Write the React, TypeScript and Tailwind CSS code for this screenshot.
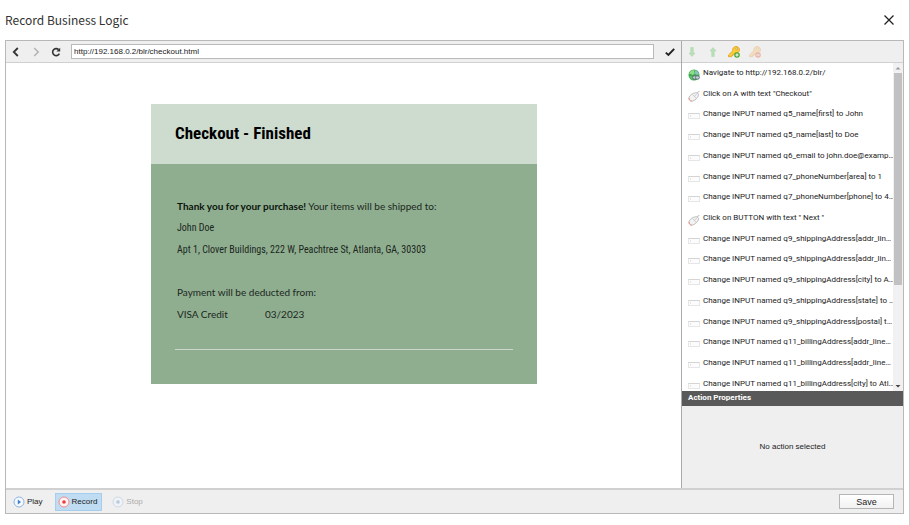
import React, { useState } from 'react';

type ActionKind = 'navigate' | 'click' | 'input';

type Action = {
  kind: ActionKind;
  text: string;
};

// long labels arrive already shortened
const ACTIONS: Action[] = [
  { kind: 'navigate', text: 'Navigate to http://192.168.0.2/blr/' },
  { kind: 'click', text: 'Click on A with text "Checkout"' },
  { kind: 'input', text: 'Change INPUT named q5_name[first] to John' },
  { kind: 'input', text: 'Change INPUT named q5_name[last] to Doe' },
  { kind: 'input', text: 'Change INPUT named q6_email to john.doe@examp…' },
  { kind: 'input', text: 'Change INPUT named q7_phoneNumber[area] to 1' },
  { kind: 'input', text: 'Change INPUT named q7_phoneNumber[phone] to 4…' },
  { kind: 'click', text: 'Click on BUTTON with text " Next "' },
  { kind: 'input', text: 'Change INPUT named q9_shippingAddress[addr_lin…' },
  { kind: 'input', text: 'Change INPUT named q9_shippingAddress[addr_lin…' },
  { kind: 'input', text: 'Change INPUT named q9_shippingAddress[city] to A…' },
  { kind: 'input', text: 'Change INPUT named q9_shippingAddress[state] to …' },
  { kind: 'input', text: 'Change INPUT named q9_shippingAddress[postal] t…' },
  { kind: 'input', text: 'Change INPUT named q11_billingAddress[addr_line…' },
  { kind: 'input', text: 'Change INPUT named q11_billingAddress[addr_line…' },
  { kind: 'input', text: 'Change INPUT named q11_billingAddress[city] to Atl…' },
];

function ActionIcon({ kind }: { kind: ActionKind }) {
  if (kind === 'navigate') {
    return (
      <svg viewBox="0 0 12 12" className="h-3 w-3 shrink-0" aria-hidden="true">
        <circle cx="6" cy="6" r="5.5" fill="#3fa850" />
        <path d="M1.2 5C1.800 2.400 4 .9 6.400 1L6 3 7 4.400 4.600 6 3 5Z" fill="#8ede86" />
        <path d="M6.800 1.200c2.400.4 4 2.200 4.300 4.200L8 5.800 6.800 4Z" fill="#86c4c0" />
        <path d="M1.400 7l2.800.6L5 10.800C3 10.200 1.800 8.800 1.400 7Z" fill="#5fc768" />
        <rect x="4.600" y="6.800" width="4" height="3.400" rx="1.600" fill="#c7ced3" stroke="#56646e" strokeWidth=".8" />
        <rect x="7.400" y="6.800" width="4" height="3.400" rx="1.600" fill="#c7ced3" stroke="#56646e" strokeWidth=".8" />
      </svg>
    );
  }
  if (kind === 'click') {
    return (
      <svg viewBox="0 0 12 12" className="h-3 w-3 shrink-0" fill="none" aria-hidden="true">
        <path d="M9 3.400C9 1.800 10.600 2.600 11.500 1" stroke="#aaa" strokeWidth=".8" />
        <path
          d="M1.200 7C2.600 4.600 4.800 3.200 7.400 2.800c2.600-.4 3.800 1.400 2.800 3.400C9.200 8.200 7.200 10 4.800 11c-2.200.8-4.800-1.500-3.600-4Z"
          fill="#f3f3f3"
          stroke="#b0b0b0"
          strokeWidth=".8"
        />
        <path d="M4.600 4.600l3.600 3.600M6.500 6.400l2.200-2.400" stroke="#bbb" strokeWidth=".7" />
        <path d="M1.200 8c-.3 1.600.8 2.900 2.600 3.200" stroke="#ee8f88" strokeWidth="1" />
      </svg>
    );
  }
  return (
    <svg viewBox="0 0 12 12" className="h-3 w-3 shrink-0" fill="none" aria-hidden="true">
      <rect x=".5" y="3.500" width="11" height="5" fill="#fcfcfc" stroke="#e6e6e6" />
      <path d="M.5 3.500h11" stroke="#d4d4d4" />
      <path d="M2.500 5v2" stroke="#e4e4e4" />
    </svg>
  );
}

function ArrowIcon({ up }: { up?: boolean }) {
  return (
    <svg viewBox="0 0 12 12" className="h-3 w-3" aria-hidden="true">
      <path
        d={up ? 'M6 1.500 9 5H7.300v5.500H4.700V5H3Z' : 'M6 10.500 9 7H7.300V1.500H4.700V7H3Z'}
        fill="#b8dfb8"
        stroke="#abd3ab"
        strokeWidth=".5"
      />
    </svg>
  );
}

function KeyIcon({ remove }: { remove?: boolean }) {
  return (
    <svg viewBox="0 0 12 12" className={remove ? 'h-3 w-3 opacity-35' : 'h-3 w-3'} aria-hidden="true">
      <path
        d="M.5 9 4.800 4.800C4.200 2.400 5.800.5 8 .5c2.100 0 3.500 1.500 3.500 3.300 0 2.200-2 3.600-4.200 3.200L6.200 8.200H5v1.200H3.700v1.300H.5Z"
        fill={remove ? '#f8bd62' : '#fdcd36'}
        stroke={remove ? '#e08e42' : '#dda024'}
        strokeWidth=".8"
      />
      <circle cx="8.800" cy="2.900" r="1" fill="#fff7cf" stroke="#b67a10" strokeWidth=".5" />
      <circle cx="9" cy="9" r="2.800" fill={remove ? '#e2502e' : '#43a52b'} />
      <path d={remove ? 'M7.300 9h3.400' : 'M7.300 9h3.400M9 7.300v3.400'} stroke="#fff" strokeWidth="1" />
    </svg>
  );
}

function MediaIcon({ kind }: { kind: 'play' | 'record' | 'stop' }) {
  const color = kind === 'record' ? '#ee3b3b' : '#3f7fcb';
  return (
    <svg viewBox="0 0 12 12" className="h-3 w-3" aria-hidden="true">
      <circle
        cx="6"
        cy="6"
        r="5"
        fill={kind === 'record' ? '#fff3f3' : '#f4f9ff'}
        stroke={kind === 'record' ? '#f08c8c' : '#8fb3e0'}
      />
      {kind === 'play' && <path d="M4.800 3.500 8 6 4.800 8.500Z" fill={color} />}
      {kind === 'record' && <circle cx="6" cy="6" r="1.800" fill={color} />}
      {kind === 'stop' && <rect x="4.500" y="4.500" width="3" height="3" fill={color} />}
    </svg>
  );
}

function BrowserBar() {
  const [url, setUrl] = useState('http://192.168.0.2/blr/checkout.html');
  return (
    <div className="flex h-[22px] items-center border-b border-[#d0d0d0] bg-[#efefef]">
      <button aria-label="Back" className="flex w-5 justify-center text-[#333]">
        <svg viewBox="0 0 10 10" className="h-[10px] w-[10px]" fill="none" stroke="currentColor" strokeWidth="1.800">
          <path d="M6.800 1 2.800 5l4 4" />
        </svg>
      </button>
      <button aria-label="Forward" disabled className="flex w-5 justify-center text-[#b3b3b3]">
        <svg viewBox="0 0 10 10" className="h-[10px] w-[10px]" fill="none" stroke="currentColor" strokeWidth="1.500">
          <path d="M3.200 1 7.200 5l-4 4" />
        </svg>
      </button>
      <button aria-label="Reload" className="flex w-5 justify-center text-[#333]">
        <svg viewBox="0 0 10 10" className="h-[10px] w-[10px]" fill="none" stroke="currentColor" strokeWidth="1.600">
          <path d="M8.300 6.600A3.500 3.500 0 1 1 7.600 2.600" />
          <path d="M9.200.8v3.800H5.400Z" fill="currentColor" stroke="none" />
        </svg>
      </button>
      <input
        aria-label="Address"
        value={url}
        onChange={(e) => setUrl(e.target.value)}
        className="ml-[5px] h-[15px] min-w-0 flex-1 border border-[#b9b9b9] bg-white px-0.5 text-[8px] leading-3 text-[#222] outline-none"
      />
      <button aria-label="Go" className="flex w-[27px] justify-center pl-1 text-[#222]">
        <svg viewBox="0 0 10 10" className="h-[10px] w-[10px]" fill="none" stroke="currentColor" strokeWidth="1.900">
          <path d="M.8 5.600 3.400 8 9.200 1.800" />
        </svg>
      </button>
    </div>
  );
}

function CheckoutPage() {
  return (
    <div className="flex-1 overflow-hidden bg-white pt-[41px] pr-36 pl-[145px]">
      <div className="bg-[#8fae90]">
        <header className="flex h-[60px] items-center bg-[#cedccf] px-6">
          <h1 className="font-['Roboto_Condensed',Roboto,sans-serif] text-[17px] font-bold text-black">
            Checkout - Finished
          </h1>
        </header>
        <div className="px-6 pt-[31px] pb-[34px] font-['Trebuchet_MS',Lato,sans-serif] text-[10px] leading-[22px] text-[#1b261c]">
          <div className="px-0.5">
            <p>
              <b className="text-[#0c140c]">Thank you for your purchase!</b> Your items will be shipped to:
            </p>
            <div className="font-['Roboto_Condensed',Roboto,sans-serif]">
              <p>John Doe</p>
              <p>Apt 1, Clover Buildings, 222 W, Peachtree St, Atlanta, GA, 30303</p>
            </div>
            <p className="mt-5">Payment will be deducted from:</p>
            <p className="flex">
              <span className="w-[88px]">VISA Credit</span>
              <span>03/2023</span>
            </p>
          </div>
          <hr className="mt-6 border-[#ccd6cc]" />
        </div>
      </div>
    </div>
  );
}

function ActionPanel() {
  return (
    <aside className="flex w-[222px] shrink-0 flex-col border-l border-[#aaa]">
      <div className="flex h-[22px] items-center gap-[9px] border-b border-[#d0d0d0] bg-[#efefef] pl-1">
        <button aria-label="Move down" disabled><ArrowIcon /></button>
        <button aria-label="Move up" disabled><ArrowIcon up /></button>
        <button aria-label="Add key"><KeyIcon /></button>
        <button aria-label="Remove key" disabled><KeyIcon remove /></button>
      </div>

      <div className="flex h-[328px] overflow-hidden bg-white">
        <ul className="flex h-[331px] min-w-0 flex-1 flex-col justify-between pl-1.5 font-[Roboto,sans-serif]">
          {ACTIONS.map((action, i) => (
            <li key={i} className="flex h-5 items-center gap-[3px]">
              <span className="pt-1">
                <ActionIcon kind={action.kind} />
              </span>
              <span className="leading-4 whitespace-nowrap">{action.text}</span>
            </li>
          ))}
        </ul>
        {/* scrollbar */}
        <div className="flex w-[10px] shrink-0 flex-col items-center bg-[#f1f1f1]">
          <svg viewBox="0 0 10 10" className="h-[10px] w-[10px]" aria-hidden="true">
            <path d="M5 4 7.500 6.500h-5Z" fill="#999" />
          </svg>
          <div className="h-[212px] w-2 bg-[#c1c1c1]" />
          <svg viewBox="0 0 10 10" className="mt-auto h-[10px] w-[10px]" aria-hidden="true">
            <path d="M5 6.500 7.500 4h-5Z" fill="#444" />
          </svg>
        </div>
      </div>

      <h2 className="h-[15px] bg-[#595959] px-1.5 font-[Roboto,sans-serif] leading-[14px] font-bold text-white">
        Action Properties
      </h2>
      <div className="flex h-[82px] items-center justify-center bg-[#efefef]">No action selected</div>
    </aside>
  );
}

export default function App() {
  return (
    <div className="border-r border-[#ccc] bg-white pr-[5px] pb-[11px] pl-[5px] font-['Liberation_Sans',Arial,sans-serif] text-[8px] text-[#222]">
      <div className="flex h-10 items-center justify-between pr-[9px]">
        <div className="font-['Noto_Sans_CJK_SC',sans-serif] text-[12px] leading-5 text-[#333]">Record Business Logic</div>
        <button aria-label="Close" className="text-[#222]">
          <svg viewBox="0 0 12 12" className="h-3 w-3" fill="none" stroke="currentColor" strokeWidth="1.300">
            <path d="m1.500 1.500 9 9M10.500 1.500l-9 9" />
          </svg>
        </button>
      </div>

      <div className="border border-[#b8b8b8]">
        <div className="flex">
          <main className="flex min-w-0 flex-1 flex-col">
            <BrowserBar />
            <CheckoutPage />
          </main>
          <ActionPanel />
        </div>

        <footer className="flex h-[25px] items-center justify-between border-t-2 border-[#d0d0d0] bg-[#efefef] pr-[9px] pl-[5px]">
          <div className="flex items-center gap-2">
            <button className="flex h-[18px] items-center gap-0.5 pr-1 pl-0.5">
              <MediaIcon kind="play" />
              Play
            </button>
            <button className="flex h-[18px] items-center gap-0.5 border border-[#a6cdec] bg-[#bfdcf3] pr-1 pl-0.5">
              <MediaIcon kind="record" />
              Record
            </button>
            <button disabled className="flex h-[18px] items-center gap-0.5 pr-1 pl-0.5 opacity-35">
              <MediaIcon kind="stop" />
              Stop
            </button>
          </div>
          <button className="h-[15px] w-[55px] border border-[#b5b5b5] bg-gradient-to-b from-white to-[#f1f1f1] text-[9px] leading-3">
            Save
          </button>
        </footer>
      </div>
    </div>
  );
}
